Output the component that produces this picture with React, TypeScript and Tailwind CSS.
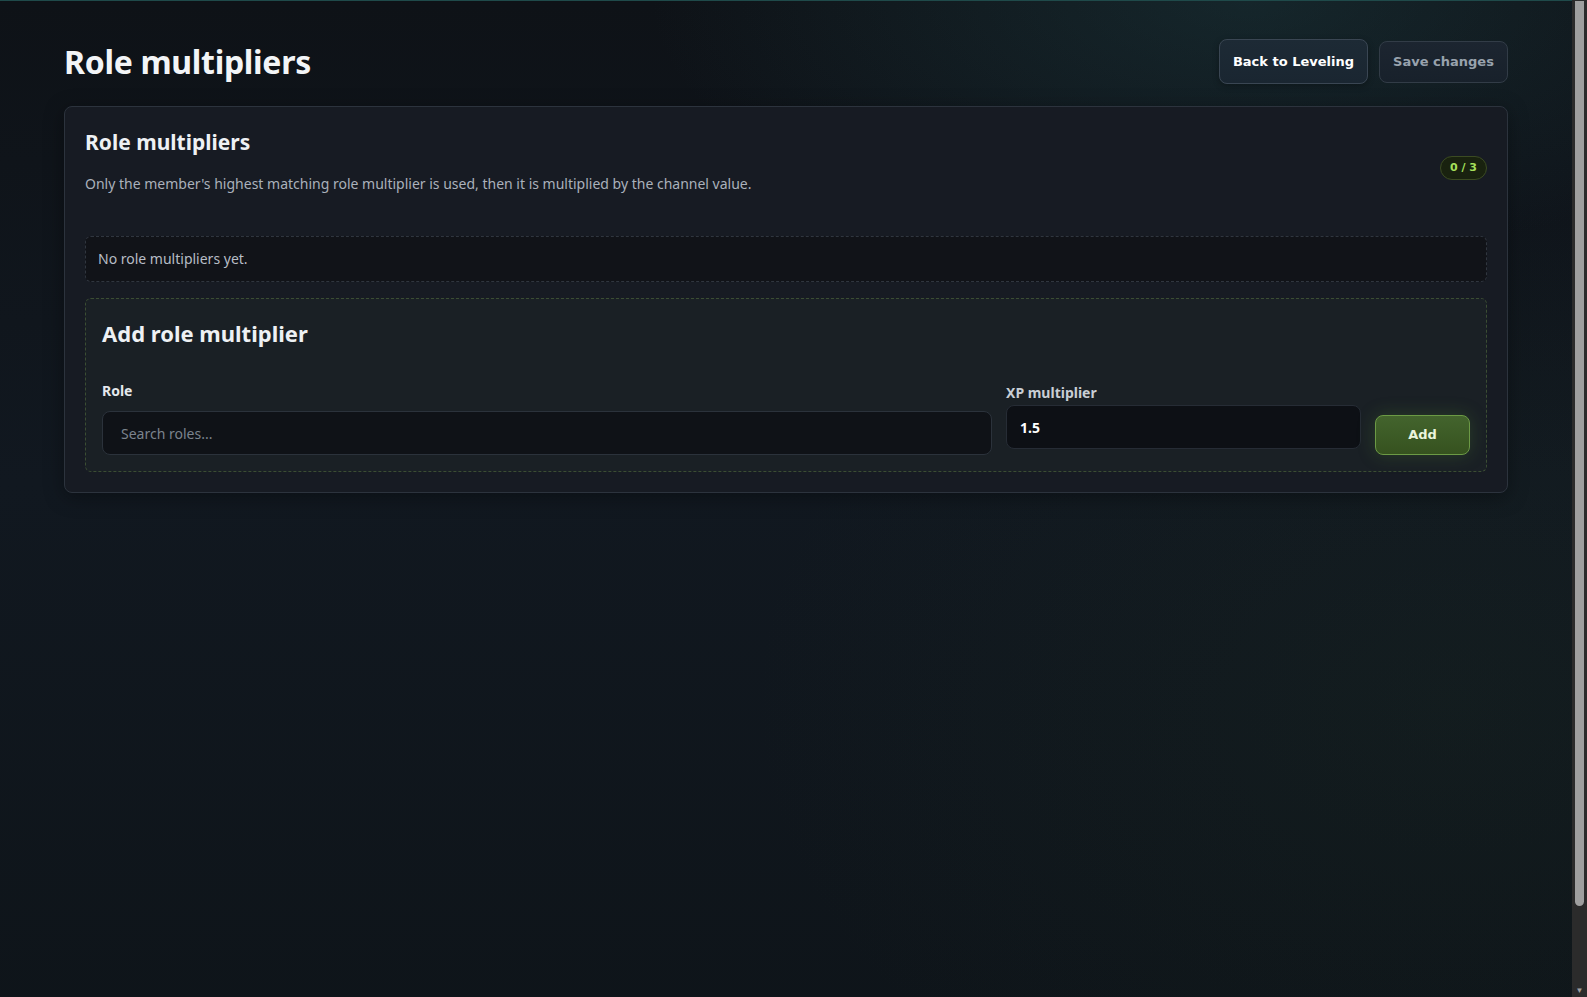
import React from 'react';

// --- Fonts ---
const uiFont = { fontFamily: '"Noto Sans", "Open Sans", sans-serif' };
const btnFont = { fontFamily: '"DejaVu Sans", Verdana, sans-serif' };

const RoleMultipliersPage: React.FC = () => {
  const used = 0;
  const limit = 3;

  return (
    <div className="flex h-[997px] w-full overflow-hidden bg-[#0f141a]" style={uiFont}>
      <div className="flex-1 min-h-[1070px] bg-[radial-gradient(ellipse_600px_260px_at_1250px_0px,rgba(40,90,95,0.28),transparent),radial-gradient(ellipse_700px_500px_at_1450px_700px,rgba(40,70,40,0.12),transparent),linear-gradient(180deg,#0e1217_0%,#111820_45%,#0e1419_100%)] border-t border-[#1f4a4a] text-white">
        <div className="px-16 pt-[38px]">
          {/* Header */}
          <header className="flex items-center justify-between h-[45px]">
            <h1 className="text-[32px] font-bold text-[#f3f5f7] tracking-[-0.3px] leading-none">Role multipliers</h1>
            <div className="flex items-center gap-[11px]" style={btnFont}>
              <button className="h-[45px] w-[149px] rounded-lg border border-[#3a4653] bg-[linear-gradient(180deg,#1d2a35,#1a2631)] text-[13px] font-bold text-white shadow-[0_2px_6px_rgba(0,0,0,0.3)]">
                Back to Leveling
              </button>
              <button className="h-[42px] w-[129px] rounded-lg border border-[#323c47] bg-[linear-gradient(180deg,#1c2530,#18212b)] text-[13px] font-bold text-[#98a2ad]">
                Save changes
              </button>
            </div>
          </header>

          {/* Card */}
          <section className="mt-[22px] rounded-lg border border-[#2c333d] bg-[#171b23] px-5 pt-[21px] pb-5 shadow-[0_4px_20px_rgba(0,0,0,0.35)]">
            <div className="flex items-center justify-between">
              <div>
                <h2 className="text-[21px] font-bold text-[#eef1f4] leading-7">Role multipliers</h2>
                <p className="mt-[18px] text-[14px] text-[#aab1bb] leading-5">
                  Only the member's highest matching role multiplier is used, then it is multiplied by the channel value.
                </p>
              </div>
              <span
                className="mt-[14px] rounded-full border border-[#3b4b22] bg-[#19220f] px-[9px] py-[3px] text-[11px] font-bold text-[#a6e05b]"
                style={btnFont}
              >
                {used} / {limit}
              </span>
            </div>

            {/* Empty state */}
            <div className="mt-[42px] rounded-md border border-dashed border-[#30363f] bg-[#111318] px-3 py-3 text-[14px] text-[#b7bdc5] leading-5">
              No role multipliers yet.
            </div>

            {/* Add form */}
            <div className="mt-4 rounded-md border border-dashed border-[#3b4d33] bg-[#1a2025] px-4 pt-5 pb-4">
              <h3 className="text-[22px] font-bold text-[#eef1f4] leading-7">Add role multiplier</h3>
              <div className="mt-[34px] flex items-end gap-[14px]">
                <div className="flex flex-1 flex-col">
                  <label className="text-[14px] font-bold text-[#e4e8ec] leading-5">Role</label>
                  <input
                    placeholder="Search roles..."
                    className="mt-[10px] h-[44px] w-full rounded-lg border border-[#2b323b] bg-[#0f1217] px-[18px] text-[14px] text-white placeholder:text-[#7b838d] outline-none"
                  />
                </div>
                <div className="flex w-[355px] flex-col pb-[6px]">
                  <label className="text-[14px] font-bold text-[#c9ced5] leading-5">XP multiplier</label>
                  <input
                    defaultValue="1.5"
                    className="mt-[2px] h-[44px] w-full rounded-lg border border-[#262c35] bg-[#0d1015] px-[13px] text-[14px] font-bold text-white outline-none"
                  />
                </div>
                <button
                  className="h-[40px] w-[95px] rounded-lg border border-[#6c9a45] bg-[linear-gradient(180deg,#43642d,#36521f)] text-[13px] font-bold text-[#eaf5dc] shadow-[0_0_18px_rgba(90,150,50,0.25)]"
                  style={btnFont}
                >
                  Add
                </button>
              </div>
            </div>
          </section>
        </div>
      </div>

      {/* Scrollbar track */}
      <div className="flex w-[15px] flex-col bg-[#2b2b2b]">
        <div className="mx-[3px] mt-[1px] h-[905px] rounded-b-full bg-[#9f9f9f]" />
        <div className="flex-1" />
        <div className="flex h-[15px] items-center justify-center text-[8px] leading-none text-[#a0a0a0]">▼</div>
      </div>
    </div>
  );
};

export default RoleMultipliersPage;
